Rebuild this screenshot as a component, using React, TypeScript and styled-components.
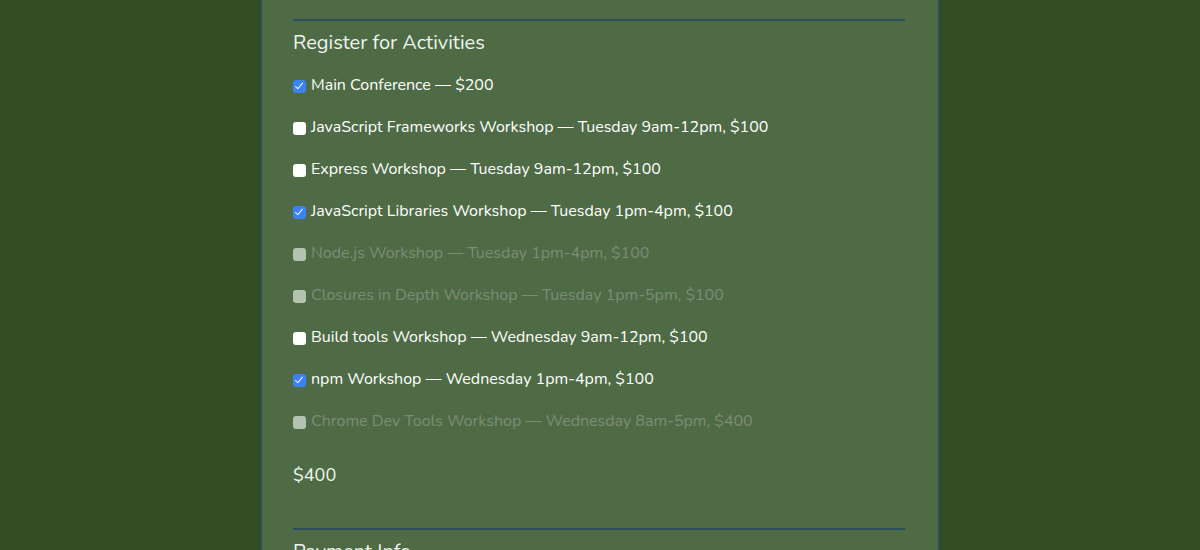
import styled, { createGlobalStyle } from 'styled-components';

const GlobalStyle = createGlobalStyle`
  body {
    margin: 0;
    background: #334c22;
    font-family: "Nunito", "Lato", "Noto Sans", sans-serif;
  }
`

const Page = styled.div`
  box-sizing: border-box;
  width: 680px;
  min-height: 100vh;
  margin: 0 auto;
  padding: 19px 33px 0 31px;
  background: #4e6b45;
  border-left: 2px solid #2b4f5c;
  border-right: 2px solid #2b4f5c;
`

const Section = styled.fieldset`
  border: none;
  border-top: 2px solid #2b4f5c;
  margin: 0;
  padding: 0;
  min-width: 0;
`

const Heading = styled.h2`
  margin: 10px 0 18px;
  font-size: 20px;
  line-height: 24px;
  font-weight: 400;
  color: #eef4ef;
`

const Row = styled.label<{ $disabled?: boolean }>`
  display: flex;
  align-items: center;
  height: 24px;
  margin-bottom: 18px;
  font-size: 16px;
  color: ${(p) => (p.$disabled ? '#7d8b77' : '#ffffff')};
`

// rounded box like the mac checkbox in the screenshot
const Box = styled.input`
  appearance: none;
  position: relative;
  box-sizing: border-box;
  width: 13px;
  height: 13px;
  margin: 2px 5px 0 0;
  border-radius: 3px;
  background: #ffffff;
  flex-shrink: 0;

  &:checked {
    background: #3b82f6;
  }

  &:checked::after {
    content: '';
    position: absolute;
    left: 4px;
    top: 1px;
    width: 3px;
    height: 7px;
    border: solid #ffffff;
    border-width: 0 1.5px 1.5px 0;
    transform: rotate(40deg);
  }

  &:disabled {
    background: #b4c2af;
  }
`

const Total = styled.p`
  margin: 30px 0 41px;
  font-size: 18px;
  line-height: 24px;
  color: #f2f6f2;
`

type Activity = { name: string; checked: boolean; disabled: boolean }

const activities: Activity[] = [
  { name: 'Main Conference — $200', checked: true, disabled: false },
  { name: 'JavaScript Frameworks Workshop — Tuesday 9am-12pm, $100', checked: false, disabled: false },
  { name: 'Express Workshop — Tuesday 9am-12pm, $100', checked: false, disabled: false },
  { name: 'JavaScript Libraries Workshop — Tuesday 1pm-4pm, $100', checked: true, disabled: false },
  { name: 'Node.js Workshop — Tuesday 1pm-4pm, $100', checked: false, disabled: true },
  { name: 'Closures in Depth Workshop — Tuesday 1pm-5pm, $100', checked: false, disabled: true },
  { name: 'Build tools Workshop — Wednesday 9am-12pm, $100', checked: false, disabled: false },
  { name: 'npm Workshop — Wednesday 1pm-4pm, $100', checked: true, disabled: false },
  { name: 'Chrome Dev Tools Workshop — Wednesday 8am-5pm, $400', checked: false, disabled: true },
]

export default function App() {
  return (
    <>
      <GlobalStyle />
      <Page>
        <Section>
          <Heading>Register for Activities</Heading>
          {activities.map((a) => (
            <Row key={a.name} $disabled={a.disabled}>
              <Box type="checkbox" defaultChecked={a.checked} disabled={a.disabled} />
              {a.name}
            </Row>
          ))}
          <Total>$400</Total>
        </Section>
        <Section>
          <Heading>Payment Info</Heading>
        </Section>
      </Page>
    </>
  )
}
